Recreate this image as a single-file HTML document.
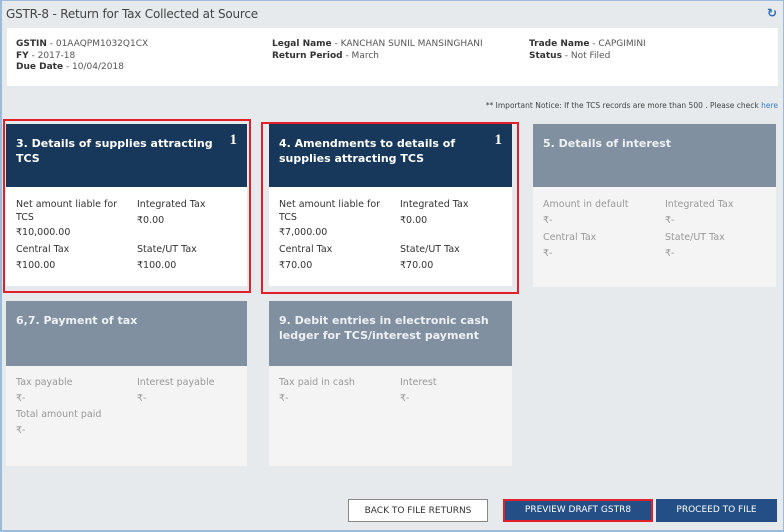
<!DOCTYPE html>
<html><head><meta charset="utf-8"><style>
*{margin:0;padding:0;box-sizing:border-box}
body{width:784px;height:532px;overflow:hidden;background:#e6eaed;font-family:"DejaVu Sans","Liberation Sans",sans-serif;font-size:9.5px;color:#333;position:relative}
.frame{position:absolute;left:0;top:0;width:784px;height:532px;border:1px solid #9cbbd9;border-left:2px solid #9cbbd9;border-bottom:2px solid #9cbbd9}
.abs{position:absolute}
.title{left:6px;top:7px;font-size:12px;color:#444;letter-spacing:-0.2px}
.info{left:7px;top:28px;width:771px;height:58px;background:#fff}
.info div{position:absolute;line-height:11.5px;font-size:9px;color:#555}
.info b{color:#333}
.notice{right:6px;top:101px;font-size:7.5px;color:#444}
.notice span{color:#3a7bbf}
.card{position:absolute;width:241px}
.hd{height:63px;padding:12px 10px;color:#fff;font-weight:bold;font-size:11px;line-height:15px;position:relative}
.hd .n{position:absolute;right:10px;top:9px;font-family:"Liberation Serif",serif;font-size:15px}
.dark .hd{background:#17385a}
.dark .bd{background:#fff;color:#333}
.gray .hd{background:#8190a0;color:#eef1f4}
.gray .bd{background:#f3f4f3;color:#999}
.bd{position:relative}
.bd span{position:absolute;white-space:nowrap;line-height:12px}
.red{position:absolute;border:2px solid #e0202a}
.btn{position:absolute;top:499px;height:23px;font-size:9px;text-align:center;line-height:23px}
</style></head><body>
<div class="frame"></div>
<div class="abs title">GSTR-8 - Return for Tax Collected at Source</div>
<div class="abs" style="right:7px;top:6px;color:#2b6cb3;font-size:12px;font-weight:bold">↻</div>
<div class="abs info">
<div style="left:9px;top:11px"><b>GSTIN</b> - 01AAQPM1032Q1CX<br><b>FY</b> - 2017-18<br><b>Due Date</b> - 10/04/2018</div>
<div style="left:265px;top:11px"><b>Legal Name</b> - KANCHAN SUNIL MANSINGHANI<br><b>Return Period</b> - March</div>
<div style="left:522px;top:11px"><b>Trade Name</b> - CAPGIMINI<br><b>Status</b> - Not Filed</div>
</div>
<div class="abs notice">** Important Notice: If the TCS records are more than 500 . Please check <span>here</span></div>

<div class="red" style="left:3px;top:119px;width:248px;height:174px"></div>
<div class="card dark" style="left:6px;top:124px"><div class="hd">3. Details of supplies attracting TCS<span class="n">1</span></div>
<div class="bd" style="height:99px">
<span style="left:10px;top:12px">Net amount liable for</span><span style="left:10px;top:25px">TCS</span><span style="left:10px;top:40px">₹10,000.00</span><span style="left:10px;top:57px">Central Tax</span><span style="left:10px;top:73px">₹100.00</span>
<span style="left:131px;top:12px">Integrated Tax</span><span style="left:131px;top:28px">₹0.00</span><span style="left:131px;top:57px">State/UT Tax</span><span style="left:131px;top:73px">₹100.00</span>
</div></div>

<div class="red" style="left:261px;top:122px;width:258px;height:172px"></div>
<div class="card dark" style="left:269px;top:124px;width:243px"><div class="hd">4. Amendments to details of supplies attracting TCS<span class="n">1</span></div>
<div class="bd" style="height:99px">
<span style="left:10px;top:12px">Net amount liable for</span><span style="left:10px;top:25px">TCS</span><span style="left:10px;top:40px">₹7,000.00</span><span style="left:10px;top:57px">Central Tax</span><span style="left:10px;top:73px">₹70.00</span>
<span style="left:131px;top:12px">Integrated Tax</span><span style="left:131px;top:28px">₹0.00</span><span style="left:131px;top:57px">State/UT Tax</span><span style="left:131px;top:73px">₹70.00</span>
</div></div>

<div class="card gray" style="left:533px;top:124px;width:243px"><div class="hd">5. Details of interest</div>
<div class="bd" style="height:100px">
<span style="left:10px;top:12px">Amount in default</span><span style="left:10px;top:28px">₹-</span><span style="left:10px;top:45px">Central Tax</span><span style="left:10px;top:61px">₹-</span>
<span style="left:132px;top:12px">Integrated Tax</span><span style="left:132px;top:28px">₹-</span><span style="left:132px;top:45px">State/UT Tax</span><span style="left:132px;top:61px">₹-</span>
</div></div>

<div class="card gray" style="left:6px;top:301px"><div class="hd" style="height:65px">6,7. Payment of tax</div>
<div class="bd" style="height:100px">
<span style="left:10px;top:11px">Tax payable</span><span style="left:10px;top:27px">₹-</span><span style="left:10px;top:43px">Total amount paid</span><span style="left:10px;top:59px">₹-</span>
<span style="left:131px;top:11px">Interest payable</span><span style="left:131px;top:27px">₹-</span>
</div></div>

<div class="card gray" style="left:269px;top:301px;width:243px"><div class="hd" style="height:65px">9. Debit entries in electronic cash ledger for TCS/interest payment</div>
<div class="bd" style="height:100px">
<span style="left:10px;top:11px">Tax paid in cash</span><span style="left:10px;top:27px">₹-</span>
<span style="left:131px;top:11px">Interest</span><span style="left:131px;top:27px">₹-</span>
</div></div>

<div class="btn" style="left:348px;width:140px;background:#fff;border:1px solid #888;color:#333">BACK TO FILE RETURNS</div>
<div class="btn" style="left:503px;width:150px;background:#234e86;color:#fff;border:2px solid #e0202a;line-height:19px">PREVIEW DRAFT GSTR8</div>
<div class="btn" style="left:656px;width:121px;background:#234e86;color:#fff">PROCEED TO FILE</div>
</body></html>
